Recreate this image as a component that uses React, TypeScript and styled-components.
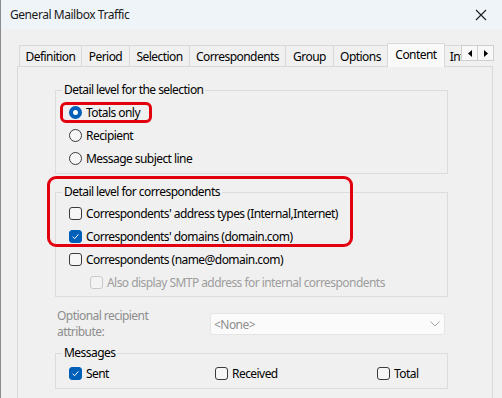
import React from "react";
import styled, { createGlobalStyle } from "styled-components";

const GlobalStyle = createGlobalStyle`
  html, body {
    margin: 0;
    padding: 0;
    background: #f0f0f0;
  }
  body {
    font-family: "Noto Sans", "Segoe UI", sans-serif;
    font-size: 12px;
    letter-spacing: -0.55px;
    color: #000;
  }
`;

const tabs = [
  { label: "Definition", width: 63 },
  { label: "Period", width: 49 },
  { label: "Selection", width: 61 },
  { label: "Correspondents", width: 97 },
  { label: "Group", width: 49 },
  { label: "Options", width: 55 },
  { label: "Content", width: 58, active: true },
  { label: "Internal", width: 52 },
];

const CheckIcon = () => (
  <svg width="9" height="9" viewBox="0 0 9 9">
    <path d="M1.6 4.8 L3.6 6.7 L7.4 2.4" fill="none" stroke="#fff" strokeWidth="1" />
  </svg>
);

const Check: React.FC<{ checked?: boolean; disabled?: boolean }> = ({ checked, disabled }) => (
  <CheckBox checked={checked} disabled={disabled}>
    {checked && <CheckIcon />}
  </CheckBox>
);

export default function App() {
  return (
    <>
      <GlobalStyle />
      <Window>
        <TitleBar>
          <Title>General Mailbox Traffic</Title>
          <svg width="12" height="12" viewBox="0 0 12 12">
            <path d="M1 1 L11 11 M11 1 L1 11" stroke="#1b1b1b" strokeWidth="1.1" />
          </svg>
        </TitleBar>

        <Body>
          <TabStrip>
            <TabViewport>
              {tabs.map((t) => (
                <Tab key={t.label} $active={t.active} $width={t.width}>
                  {t.label}
                </Tab>
              ))}
            </TabViewport>
            <ScrollArrows>
              <ArrowButton>
                <svg width="4" height="7" viewBox="0 0 4 7">
                  <path d="M4 0 L0 3.5 L4 7 Z" fill="#000" />
                </svg>
              </ArrowButton>
              <ArrowButton>
                <svg width="4" height="7" viewBox="0 0 4 7">
                  <path d="M0 0 L4 3.5 L0 7 Z" fill="#000" />
                </svg>
              </ArrowButton>
            </ScrollArrows>
          </TabStrip>

          <Panel>
            <GroupBox>
              <Legend>Detail level for the selection</Legend>
              <Rows $top={3} $bottom={3}>
                <OptionRow>
                  <Highlight>
                    <Radio checked />
                    <span>Totals only</span>
                  </Highlight>
                </OptionRow>
                <OptionRow>
                  <Radio />
                  <span>Recipient</span>
                </OptionRow>
                <OptionRow>
                  <Radio />
                  <span>Message subject line</span>
                </OptionRow>
              </Rows>
            </GroupBox>

            <GroupWrap $gap={10}>
              <GroupBox>
                <Legend>Detail level for correspondents</Legend>
                <Rows $top={2} $bottom={2}>
                  <OptionRow>
                    <Check />
                    <span>Correspondents' address types (Internal,Internet)</span>
                  </OptionRow>
                  <OptionRow>
                    <Check checked />
                    <span>Correspondents' domains (domain.com)</span>
                  </OptionRow>
                  <OptionRow>
                    <Check />
                    <span>Correspondents (name@domain.com)</span>
                  </OptionRow>
                  <OptionRow $indent={34} $disabled>
                    <Check disabled />
                    <span>Also display SMTP address for internal correspondents</span>
                  </OptionRow>
                </Rows>
              </GroupBox>
              <AnnotationFrame />
            </GroupWrap>

            <AttributeRow>
              <AttributeLabel>
                <div>Optional recipient</div>
                <div>attribute:</div>
              </AttributeLabel>
              <Combo>
                <span>&lt;None&gt;</span>
                <svg width="10" height="6" viewBox="0 0 10 6">
                  <path d="M0.5 0.5 L5 5 L9.5 0.5" fill="none" stroke="#a6a6a6" strokeWidth="1" />
                </svg>
              </Combo>
            </AttributeRow>

            <GroupWrap $gap={5}>
              <GroupBox>
                <Legend>Messages</Legend>
                <Rows $top={1} $bottom={3}>
                  <MessagesGrid>
                    <InlineOption>
                      <Check checked />
                      <span>Sent</span>
                    </InlineOption>
                    <InlineOption>
                      <Check />
                      <span>Received</span>
                    </InlineOption>
                    <InlineOption>
                      <Check />
                      <span>Total</span>
                    </InlineOption>
                  </MessagesGrid>
                </Rows>
              </GroupBox>
            </GroupWrap>
          </Panel>
        </Body>
      </Window>
    </>
  );
}

const Window = styled.div`
  width: 502px;
  height: 398px;
  box-sizing: border-box;
  overflow: hidden;
  border-left: 1px solid #8c8c8c;
  background: #f0f0f0;
  display: flex;
  flex-direction: column;
`;

const TitleBar = styled.div`
  height: 29px;
  flex: none;
  background: #eff4f9;
  display: flex;
  align-items: center;
  justify-content: space-between;
  padding: 0 15px 0 9px;
`;

const Title = styled.div`
  color: #1a1a1a;
  font-size: 12px;
  letter-spacing: -0.45px;
`;

const Body = styled.div`
  flex: 1;
  padding: 14px 9px 0 16px;
  display: flex;
  flex-direction: column;
  min-height: 0;
`;

const TabStrip = styled.div`
  height: 23px;
  display: flex;
  align-items: flex-end;
  margin-left: 1px;
  position: relative;
  z-index: 1;
`;

const TabViewport = styled.div`
  flex: 1;
  min-width: 0;
  display: flex;
  align-items: flex-end;
  overflow: hidden;
  height: 24px;
  margin-bottom: -1px;
`;

const Tab = styled.div<{ $active?: boolean; $width: number }>`
  flex: none;
  box-sizing: border-box;
  width: ${(p) => p.$width}px;
  height: ${(p) => (p.$active ? 24 : 22)}px;
  margin-right: -1px;
  border: 1px solid #d9d9d9;
  border-bottom: ${(p) => (p.$active ? "none" : "1px solid #d9d9d9")};
  background: ${(p) => (p.$active ? "#f9f9f9" : "#f0f0f0")};
  display: flex;
  align-items: center;
  justify-content: center;
  padding-bottom: ${(p) => (p.$active ? 3 : 0)}px;
  white-space: nowrap;
  position: relative;
  z-index: ${(p) => (p.$active ? 2 : 1)};
  &:first-child {
    margin-left: 1px;
  }
`;

const ScrollArrows = styled.div`
  flex: none;
  display: flex;
  align-self: flex-start;
  margin-top: 2px;
  margin-right: -1px;
`;

const ArrowButton = styled.div`
  width: 17px;
  height: 16px;
  box-sizing: border-box;
  border: 1px solid #cfcfcf;
  background: #f8f8f8;
  display: flex;
  align-items: center;
  justify-content: center;
  & + & {
    margin-left: -1px;
  }
`;

const Panel = styled.div`
  flex: 1;
  border: 1px solid #d9d9d9;
  border-bottom: none;
  background: #f0f0f0;
  padding: 15px 44px 0 37px;
`;

const GroupWrap = styled.div<{ $gap: number }>`
  position: relative;
  margin-top: ${(p) => p.$gap}px;
`;

const GroupBox = styled.fieldset`
  margin: 0;
  padding: 0;
  border: 1px solid #dcdcdc;
  min-width: 0;
`;

const Legend = styled.legend`
  margin-left: 6px;
  padding: 0 2px;
  line-height: 16px;
  color: #000;
`;

const Rows = styled.div<{ $top: number; $bottom: number }>`
  padding-top: ${(p) => p.$top}px;
  padding-bottom: ${(p) => p.$bottom}px;
`;

const OptionRow = styled.div<{ $indent?: number; $disabled?: boolean }>`
  height: 23px;
  display: flex;
  align-items: center;
  gap: 4px;
  padding-left: ${(p) => p.$indent ?? 13}px;
  color: ${(p) => (p.$disabled ? "#9d9d9d" : "#000")};
  white-space: nowrap;
`;

const Highlight = styled.div`
  display: inline-flex;
  align-items: center;
  gap: 4px;
  height: 21px;
  box-sizing: border-box;
  margin-left: -9px;
  padding: 0 9px 0 6px;
  border: 3px solid #e3000f;
  border-radius: 6px;
`;

const AnnotationFrame = styled.div`
  position: absolute;
  left: -8px;
  top: -8px;
  width: 306px;
  height: 71px;
  box-sizing: border-box;
  border: 3px solid #e3000f;
  border-radius: 9px;
  pointer-events: none;
`;

const Radio = styled.span<{ checked?: boolean }>`
  flex: none;
  width: 13px;
  height: 13px;
  box-sizing: border-box;
  border-radius: 50%;
  background: ${(p) => (p.checked ? "#fff" : "#f6f6f6")};
  border: ${(p) => (p.checked ? "4px solid #005fb8" : "1px solid #3a3a3a")};
`;

const CheckBox = styled.span<{ checked?: boolean; disabled?: boolean }>`
  flex: none;
  width: 13px;
  height: 13px;
  box-sizing: border-box;
  border-radius: 3px;
  display: flex;
  align-items: center;
  justify-content: center;
  border: 1px solid
    ${(p) => (p.checked ? "#005fb8" : p.disabled ? "#c9c9c9" : "#3a3a3a")};
  background: ${(p) => (p.checked ? "#005fb8" : p.disabled ? "#f3f3f3" : "#f6f6f6")};
`;

const AttributeRow = styled.div`
  margin-top: 11px;
  display: flex;
  align-items: center;
`;

const AttributeLabel = styled.div`
  width: 155px;
  padding-left: 2px;
  box-sizing: border-box;
  line-height: 16px;
  color: #8d8d8d;
`;

const Combo = styled.div`
  width: 235px;
  height: 22px;
  box-sizing: border-box;
  border: 1px solid #e6e6e6;
  border-radius: 3px;
  background: #fbfbfb;
  color: #8d8d8d;
  display: flex;
  align-items: center;
  justify-content: space-between;
  padding: 0 4px 0 3px;
`;

const MessagesGrid = styled.div`
  display: grid;
  grid-template-columns: 146px 162px auto;
  padding-left: 13px;
  height: 23px;
  align-items: center;
`;

const InlineOption = styled.div`
  display: flex;
  align-items: center;
  gap: 4px;
`;
